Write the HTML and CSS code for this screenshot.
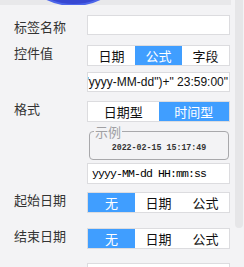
FILE: index.html
```
<!DOCTYPE html>
<html lang="zh-CN">
<head>
  <meta charset="UTF-8" />
  <title>控件属性</title>
  <link rel="stylesheet" href="styles.css">
</head>
<body>
  <div class="topbar"><div class="avatar"></div></div>
  <div class="thumb"></div>

  <div class="panel">
    <div class="row row-center">
      <label class="lbl">标签名称</label>
      <div class="ctrl"><div class="input"></div></div>
    </div>

    <div class="row gap-10">
      <label class="lbl">控件值</label>
      <div class="ctrl">
        <div class="seg">
          <span>日期</span><span class="on">公式</span><span>字段</span>
        </div>
        <div class="input formula"><span>"yyyy-MM-dd")+" 23:59:00"</span></div>
      </div>
    </div>

    <div class="row gap-9">
      <label class="lbl">格式</label>
      <div class="ctrl">
        <div class="seg">
          <span>日期型</span><span class="on">时间型</span>
        </div>
        <fieldset class="sample">
          <legend>示例</legend>
          <div class="sample-text">2022-02-15 15:17:49</div>
        </fieldset>
        <div class="input mono">yyyy-MM-dd HH:mm:ss</div>
      </div>
    </div>

    <div class="row gap-8">
      <label class="lbl">起始日期</label>
      <div class="ctrl">
        <div class="seg">
          <span class="on">无</span><span>日期</span><span>公式</span>
        </div>
      </div>
    </div>

    <div class="row gap-15">
      <label class="lbl">结束日期</label>
      <div class="ctrl">
        <div class="seg">
          <span class="on">无</span><span>日期</span><span>公式</span>
        </div>
      </div>
    </div>

    <div class="row gap-14">
      <label class="lbl"></label>
      <div class="ctrl"><div class="input"></div></div>
    </div>
  </div>
</body>
</html>
```

FILE: styles.css
```
body {
  margin: 0;
  width: 244px;
  height: 267px;
  overflow: hidden;
  position: relative;
  background: #f3f3f5;
  font-family: "Noto Sans CJK SC", "Liberation Sans", sans-serif;
  font-size: 13px;
  color: #222;
}

.topbar {
  position: relative;
  width: 231px;
  height: 5px;
  background: #e8e8ea;
  overflow: hidden;
}

/* header avatar, only its bottom edge shows */
.avatar {
  position: absolute;
  left: 12px;
  top: -117px;
  width: 119px;
  height: 119px;
  border-radius: 50%;
  background: #3748d2;
  border: 2px solid #4d66ea;
}

.thumb {
  position: absolute;
  left: 235px;
  top: 0;
  width: 8px;
  height: 228px;
  background: #e6e6e8;
  border-radius: 0 0 4px 4px;
}

.panel {
  width: 216px;
  padding-left: 14px;
  padding-top: 10px;
}

.row {
  display: flex;
  align-items: flex-start;
}

.row-center {
  align-items: center;
}

.gap-8 { margin-top: 8px; }
.gap-9 { margin-top: 9px; }
.gap-10 { margin-top: 10px; }
.gap-14 { margin-top: 14px; }
.gap-15 { margin-top: 15px; }

.lbl {
  width: 73px;
  flex: none;
  line-height: 16px;
  color: #333;
}

.row-center .lbl {
  padding-top: 3px;
}

.ctrl {
  width: 143px;
  display: flex;
  flex-direction: column;
}

.input {
  box-sizing: border-box;
  height: 20px;
  background: #fff;
  border: 1px solid #dcdcdf;
}

.formula {
  margin-top: 6px;
  display: flex;
  justify-content: flex-end;
  align-items: center;
  overflow: hidden;
  white-space: nowrap;
  padding-right: 1px;
  font-family: "Liberation Sans", sans-serif;
  font-size: 12px;
  color: #111;
}

.seg {
  box-sizing: border-box;
  height: 21px;
  display: flex;
  background: #fff;
  border: 1px solid #dcdcdf;
}

.seg span {
  flex: 1;
  text-align: center;
  line-height: 19px;
  color: #111;
}

.seg .on {
  background: #409eff;
  color: #fff;
}

.sample {
  margin: 3px 1px 0 2px;
  padding: 4px 0 5px;
  border: 1px solid #a8a8ab;
  border-radius: 4px;
  min-width: 0;
}

.sample legend {
  margin-left: 4px;
  padding: 0 1px;
  line-height: 13px;
  color: #a0a0a3;
}

.sample-text {
  text-align: center;
  line-height: 12px;
  font-family: "Liberation Mono", monospace;
  font-size: 8.3px;
  font-weight: 600;
  color: #333;
}

.mono {
  margin-top: 3px;
  height: 21px;
  padding-left: 4px;
  line-height: 19px;
  font-family: "Liberation Mono", monospace;
  font-size: 11.5px;
  letter-spacing: -0.9px;
  color: #000;
}
```
